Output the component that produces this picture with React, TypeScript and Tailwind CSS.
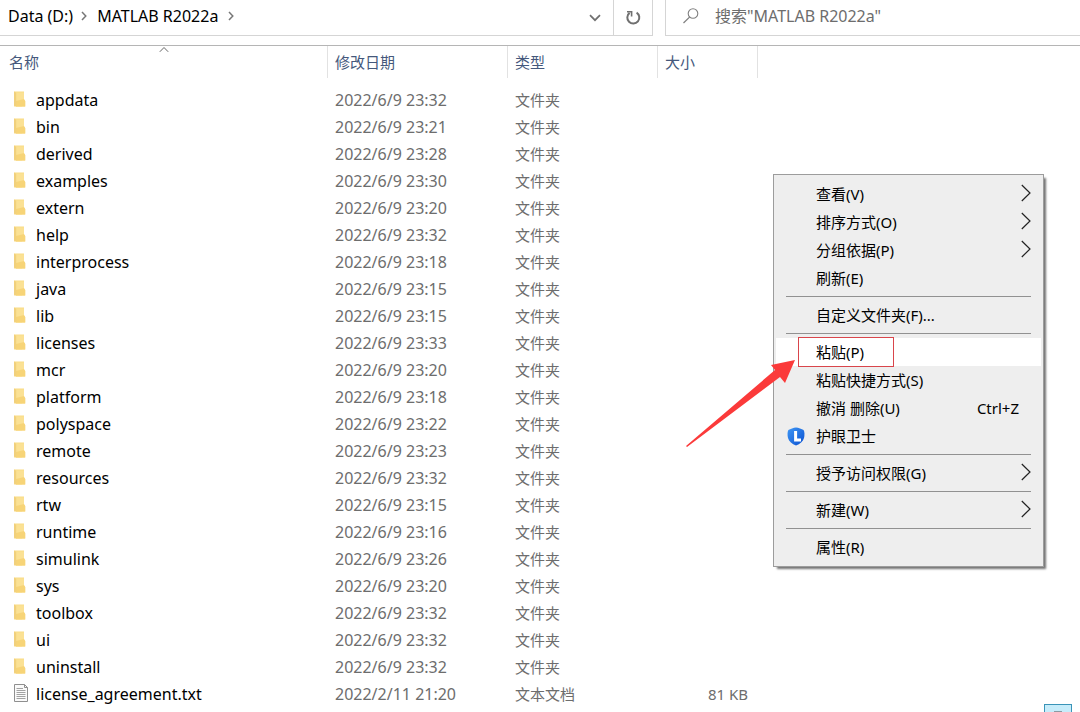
import React from "react";

type Entry = { name: string; date: string; type: string; size?: string; kind: "folder" | "text" };

const folder = (name: string, time: string): Entry => ({
  name,
  date: `2022/6/9 ${time}`,
  type: "文件夹",
  kind: "folder",
});

const entries: Entry[] = [
  folder("appdata", "23:32"),
  folder("bin", "23:21"),
  folder("derived", "23:28"),
  folder("examples", "23:30"),
  folder("extern", "23:20"),
  folder("help", "23:32"),
  folder("interprocess", "23:18"),
  folder("java", "23:15"),
  folder("lib", "23:15"),
  folder("licenses", "23:33"),
  folder("mcr", "23:20"),
  folder("platform", "23:18"),
  folder("polyspace", "23:22"),
  folder("remote", "23:23"),
  folder("resources", "23:32"),
  folder("rtw", "23:15"),
  folder("runtime", "23:16"),
  folder("simulink", "23:26"),
  folder("sys", "23:20"),
  folder("toolbox", "23:32"),
  folder("ui", "23:32"),
  folder("uninstall", "23:32"),
  { name: "license_agreement.txt", date: "2022/2/11 21:20", type: "文本文档", size: "81 KB", kind: "text" },
];

type Item = { label: string; submenu?: boolean; shortcut?: string; shield?: boolean; active?: boolean };

const menuGroups: Item[][] = [
  [
    { label: "查看(V)", submenu: true },
    { label: "排序方式(O)", submenu: true },
    { label: "分组依据(P)", submenu: true },
    { label: "刷新(E)" },
  ],
  [{ label: "自定义文件夹(F)..." }],
  [
    { label: "粘贴(P)", active: true },
    { label: "粘贴快捷方式(S)" },
    { label: "撤消 删除(U)", shortcut: "Ctrl+Z" },
    { label: "护眼卫士", shield: true },
  ],
  [{ label: "授予访问权限(G)", submenu: true }],
  [{ label: "新建(W)", submenu: true }],
  [{ label: "属性(R)" }],
];

function FolderIcon() {
  return (
    <svg className="block" width="16" height="18" viewBox="0 0 16 18" aria-hidden="true">
      <path d="M2 1.5 H12 V10 L13.2 11 V16.5 H2 Z" fill="#f9dc86" />
      <path d="M4 2.5 H12 V11 L10 12 V16.5 H4 Z" fill="#fbe194" />
      <path d="M4 11 L12 9 L13.2 11 V16.5 H4 Z" fill="#f7d477" />
      <path d="M2 1.5 L4.2 3 V16.5 L2 15.5 Z" fill="#f1d07c" />
    </svg>
  );
}

function TextFileIcon() {
  return (
    <svg className="block" width="16" height="18" viewBox="0 0 16 18" aria-hidden="true">
      <path d="M2.5 .5 H12.5 L15.5 3.5 V17.5 H2.5 Z" fill="#fafafa" stroke="#8f8f8f" />
      <path d="M12.5 .5 V3.5 H15.5" fill="none" stroke="#8f8f8f" />
      <path d="M4.5 4.5 H11 M4.5 6.5 H13.5 M4.5 8.5 H13.5 M4.5 10.5 H13.5 M4.5 12.5 H13.5 M4.5 14.5 H13.5" stroke="#a2a2a2" />
    </svg>
  );
}

function CrumbChevron() {
  return (
    <svg className="block" width="6" height="10" viewBox="0 0 6 10" fill="none" aria-hidden="true">
      <path d="M1 1 L4.8 5 L1 9" stroke="#777" strokeWidth="1.5" />
    </svg>
  );
}

function Shield() {
  return (
    <svg className="block" width="18" height="19" viewBox="0 0 18 19" aria-hidden="true">
      <defs>
        <linearGradient id="shield" x1="0" y1="0" x2="1" y2="1">
          <stop offset="0" stopColor="#3f97f5" />
          <stop offset="1" stopColor="#0a50d0" />
        </linearGradient>
      </defs>
      <path d="M9 .5 C11.5 .8 14.6 1.8 16.6 3 C17.8 5 17.6 8.6 17 11 C16 14.4 13 17.2 9 18.5 C5 17.2 2 14.4 1 11 C.4 8.6 .2 5 1.4 3 C3.4 1.8 6.5 .8 9 .5 Z" fill="url(#shield)" />
      <path d="M8.6 4 V13 H14" fill="none" stroke="#fff" strokeWidth="3" />
    </svg>
  );
}

function AddressBar() {
  return (
    <header className="flex h-9 text-base leading-5">
      <div className="flex min-w-0 flex-1 border-b border-[#d5d5d5]">
        <nav aria-label="路径" className="flex flex-1 items-center pb-1 pl-2">
          <a href="#data" className="whitespace-nowrap">Data (D:)</a>
          <span className="ml-2"><CrumbChevron /></span>
          <a href="#matlab" className="ml-[10px] whitespace-nowrap">MATLAB R2022a</a>
          <span className="ml-[10px]"><CrumbChevron /></span>
        </nav>
        <button type="button" aria-label="历史记录" className="flex w-9 items-center justify-center">
          <svg width="12" height="8" viewBox="0 0 12 8" fill="none">
            <path d="M1 1.2 L6 6.2 L11 1.2" stroke="#707070" strokeWidth="1.7" />
          </svg>
        </button>
        <button type="button" aria-label="刷新" className="flex w-10 items-center justify-center border-x border-[#d5d5d5]">
          <svg width="16" height="16" viewBox="0 0 16 16" fill="none">
            <path d="M11.6 2.6 A6 6 0 1 1 4.6 2.9" stroke="#707070" strokeWidth="2" />
            <path d="M2 1.8 H6.6 V6.4" stroke="#707070" strokeWidth="1.6" />
          </svg>
        </button>
      </div>
      <label className="ml-3 flex w-[415px] items-center border-b border-l border-[#d5d5d5] pb-1 pl-4">
        <svg className="shrink-0" width="18" height="18" viewBox="0 0 18 18" fill="none" aria-hidden="true">
          <circle cx="11" cy="6.5" r="4.8" stroke="#808080" strokeWidth="1.1" />
          <path d="M7.8 9.9 L1.5 16" stroke="#808080" strokeWidth="1.3" />
        </svg>
        <input
          type="search"
          aria-label="搜索"
          placeholder={'搜索"MATLAB R2022a"'}
          className="ml-[15px] min-w-0 flex-1 bg-transparent outline-none placeholder:text-[#6d6d6d]"
        />
      </label>
    </header>
  );
}

function FileTable() {
  return (
    <table className="w-full table-fixed border-collapse text-left text-[15px] leading-5">
      <colgroup>
        <col className="w-[328px]" />
        <col className="w-[180px]" />
        <col className="w-[150px]" />
        <col className="w-[100px]" />
        <col />
      </colgroup>
      <thead className="text-[#45587c]">
        <tr>
          <th className="h-8 p-0 font-normal">
            <div className="relative flex h-8 items-center border-r border-[#e2e2e2] pl-[9px]">
              名称
              <svg className="absolute inset-x-0 top-0 mx-auto" width="10" height="7" viewBox="0 0 10 7" fill="none" aria-hidden="true">
                <path d="M.8 5.8 L5 1.5 L9.2 5.8" stroke="#666" />
              </svg>
            </div>
          </th>
          {["修改日期", "类型", "大小"].map((title) => (
            <th key={title} className="p-0 font-normal">
              <div className="flex h-8 items-center border-r border-[#e2e2e2] pl-[7px]">{title}</div>
            </th>
          ))}
          <th className="p-0" />
        </tr>
      </thead>
      <tbody className="text-[#6d6d6d] before:block before:h-2">
        {entries.map((e) => (
          <tr key={e.name} className="h-[27px]">
            <td className="p-0 text-base leading-5 text-black">
              <div className="flex items-center pl-3">
                <span className="pb-[2px]">{e.kind === "folder" ? <FolderIcon /> : <TextFileIcon />}</span>
                <span className="ml-2">{e.name}</span>
              </div>
            </td>
            <td className="p-0 pl-[7px] text-base leading-5">{e.date}</td>
            <td className="p-0 pl-[7px]">{e.type}</td>
            <td className="p-0 pr-[10px] text-right">{e.size}</td>
            <td className="p-0" />
          </tr>
        ))}
      </tbody>
    </table>
  );
}

function MenuRow({ item }: { item: Item }) {
  return (
    <button
      type="button"
      role="menuitem"
      className={`flex h-7 w-full items-center pr-[10px] pl-[11px] text-left ${item.active ? "bg-white" : ""}`}
    >
      <span className="w-[29px] shrink-0">{item.shield && <Shield />}</span>
      <span className="relative flex-1 whitespace-nowrap">
        {item.label}
        {item.active && <span className="absolute -top-[5px] -left-[18px] h-[30px] w-24 border border-[#d9454b]" />}
      </span>
      {item.shortcut && <span className="mr-3">{item.shortcut}</span>}
      {item.submenu && (
        <svg className="mb-[2px]" width="10" height="18" viewBox="0 0 10 18" fill="none" aria-hidden="true">
          <path d="M.8 1 L9 9 L.8 17" stroke="#222" strokeWidth="1.2" />
        </svg>
      )}
    </button>
  );
}

function ContextMenu() {
  return (
    <div
      role="menu"
      className="absolute top-[174px] left-[773px] w-[271px] border border-[#9c9c9c] bg-[#eeeeee] px-[2px] py-[5px] text-[15px] leading-5 text-black shadow-[3px_3px_2px_-1px_rgba(0,0,0,0.55)]"
    >
      {menuGroups.map((group, i) => (
        <React.Fragment key={i}>
          {i > 0 && <div role="separator" className="mx-[10px] my-1 h-px bg-[#919191]" />}
          {group.map((item) => (
            <MenuRow key={item.label} item={item} />
          ))}
        </React.Fragment>
      ))}
    </div>
  );
}

export default function App() {
  return (
    <main className="relative min-h-screen overflow-hidden bg-white font-['Noto_Sans','Noto_Sans_CJK_SC',sans-serif] text-black">
      <AddressBar />
      <section className="mt-[9px] border-t border-[#b5b5b5]">
        <FileTable />
      </section>
      <ContextMenu />
      <svg className="absolute top-[355px] left-[684px]" width="112" height="94" viewBox="0 0 112 94" aria-hidden="true">
        <path d="M111 5 L101 28 L96 22 L3 92 L2 91 L91 15 L87 10 Z" fill="#fb3a3a" />
      </svg>
      <button
        type="button"
        aria-label="详细信息视图"
        className="absolute right-2 bottom-0 flex h-2 w-7 items-end justify-center border border-b-0 border-[#3a94b8] bg-[#c6ecfa]"
      >
        <span className="h-px w-2 bg-[#8a9ba3]" />
      </button>
    </main>
  );
}
